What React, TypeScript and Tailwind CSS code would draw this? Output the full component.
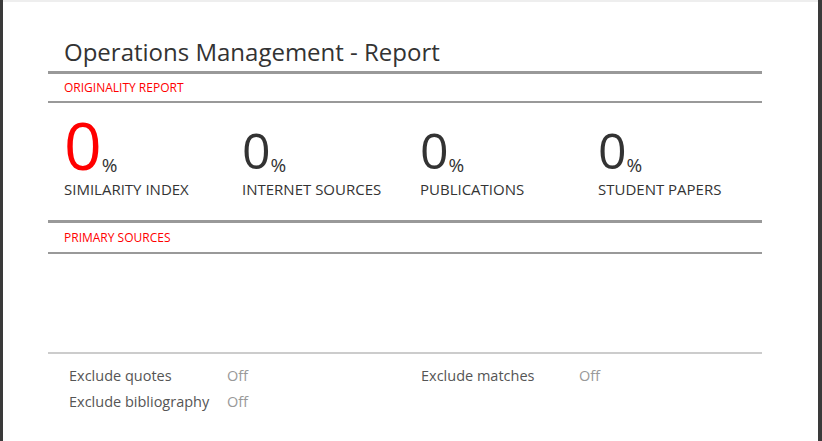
export default function App() {
  const stats = [
    { n: "SIMILARITY INDEX", big: true },
    { n: "INTERNET SOURCES" },
    { n: "PUBLICATIONS" },
    { n: "STUDENT PAPERS" },
  ];
  return (
    <div className="w-[822px] h-[441px] bg-[#3a3a3a] flex overflow-hidden" style={{ fontFamily: '"Open Sans", sans-serif' }}>
      <div className="ml-[3px] mr-[4px] flex-1 bg-white border-t-2 border-[#eeeeee]">
        <div className="ml-[45px] w-[714px] pt-[34px]">
          <div className="pl-4 text-[24px] leading-[32px] text-[#333]">Operations Management - Report</div>
          <div className="mt-[3px] h-[3px] bg-[#999]" />
          <div className="pl-4 h-[27px] flex items-center text-[12px] text-[#ff0000]">ORIGINALITY REPORT</div>
          <div className="h-[2px] bg-[#999]" />
          <div className="pl-4 flex pt-[10px]">
            {stats.map((s) => (
              <div key={s.n} className="w-[178px] flex-none flex flex-col">
                <div className="h-[62px] flex items-end">
                  <span className={s.big ? "text-[66px] leading-[62px] text-[#ff0000]" : "text-[50px] leading-[50px] text-[#333]"}>0</span>
                  <span className="text-[19px] leading-[24px] text-[#333] mb-[-2px]">%</span>
                </div>
                <div className="mt-[4px] text-[15px] leading-[20px] text-[#333]">{s.n}</div>
              </div>
            ))}
          </div>
          <div className="mt-[21px] h-[3px] bg-[#999]" />
          <div className="pl-4 h-[29px] flex items-center text-[12px] text-[#ff0000]">PRIMARY SOURCES</div>
          <div className="h-[2px] bg-[#999]" />
          <div className="mt-[98px] h-[2px] bg-[#cccccc]" />
          <div className="pl-[21px] pt-[12px] grid grid-cols-[158px_194px_158px_auto] gap-y-[6px] text-[14.5px] leading-[20px]">
            <div className="text-[#555]">Exclude quotes</div>
            <div className="text-[#999]">Off</div>
            <div className="text-[#555]">Exclude matches</div>
            <div className="text-[#999]">Off</div>
            <div className="text-[#555]">Exclude bibliography</div>
            <div className="text-[#999]">Off</div>
          </div>
        </div>
      </div>
    </div>
  );
}
